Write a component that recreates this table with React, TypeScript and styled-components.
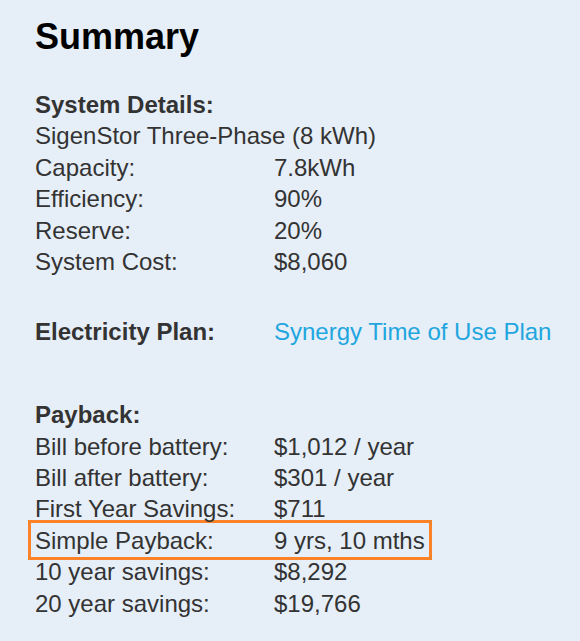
import React from "react";
import styled, { createGlobalStyle } from "styled-components";

const Global = createGlobalStyle`
  html, body {
    margin: 0;
    padding: 0;
    background: #e6eef7;
  }
  body {
    font-family: "Liberation Sans", Arial, sans-serif;
    color: #333333;
  }
`;

const Page = styled.div`
  min-height: 641px;
  box-sizing: border-box;
  padding: 17px 35px 0 35px;
  background: #e6eef7;
`;

const Title = styled.h1`
  margin: 0 0 32px 0;
  font-size: 36px;
  line-height: 40px;
  font-weight: 700;
  color: #000000;
`;

const Section = styled.section<{ $gap: number }>`
  margin-bottom: ${(p) => p.$gap}px;
  font-size: 24px;
  line-height: 31.43px;
`;

const Heading = styled.div`
  font-weight: 700;
`;

const Line = styled.div``;

const Row = styled.div<{ $highlight?: boolean }>`
  display: grid;
  grid-template-columns: 239px auto;
  ${(p) =>
    p.$highlight
      ? `
    width: fit-content;
    border: 3px solid #fb8228;
    padding: 2px 4px 1px 4px;
    margin: -5px -7px -4px -7px;
  `
      : ""}
`;

const BoldLabel = styled.span`
  font-weight: 700;
`;

const Label = styled.span``;

const Value = styled.span<{ $link?: boolean }>`
  color: ${(p) => (p.$link ? "#1fa6df" : "inherit")};
  white-space: nowrap;
`;

const details: [string, string][] = [
  ["Capacity:", "7.8kWh"],
  ["Efficiency:", "90%"],
  ["Reserve:", "20%"],
  ["System Cost:", "$8,060"],
];

const payback: [string, string, boolean?][] = [
  ["Bill before battery:", "$1,012 / year"],
  ["Bill after battery:", "$301 / year"],
  ["First Year Savings:", "$711"],
  ["Simple Payback:", "9 yrs, 10 mths", true],
  ["10 year savings:", "$8,292"],
  ["20 year savings:", "$19,766"],
];

export default function App() {
  return (
    <>
      <Global />
      <Page>
        <Title>Summary</Title>
        <Section $gap={38}>
          <Heading>System Details:</Heading>
          <Line>SigenStor Three-Phase (8 kWh)</Line>
          {details.map(([l, v]) => (
            <Row key={l}>
              <Label>{l}</Label>
              <Value>{v}</Value>
            </Row>
          ))}
        </Section>
        <Section $gap={52}>
          <Row>
            <BoldLabel>Electricity Plan:</BoldLabel>
            <Value $link>Synergy Time of Use Plan</Value>
          </Row>
        </Section>
        <Section $gap={0}>
          <Heading>Payback:</Heading>
          {payback.map(([l, v, h]) => (
            <Row key={l} $highlight={h}>
              <Label>{l}</Label>
              <Value>{v}</Value>
            </Row>
          ))}
        </Section>
      </Page>
    </>
  );
}
